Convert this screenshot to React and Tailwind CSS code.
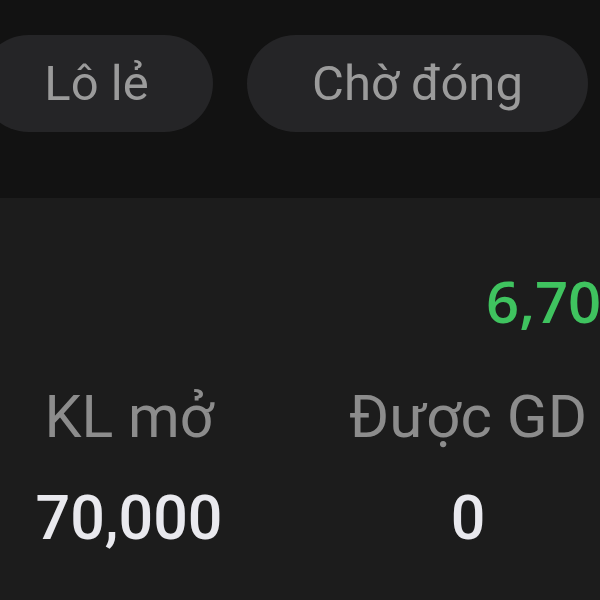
import React from "react";

const roboto = { fontFamily: "Roboto, 'Liberation Sans', sans-serif" };

function Pill({ label, width }) {
  return (
    <div
      className={`${width} h-[97px] shrink-0 rounded-full bg-[#252527] flex items-center justify-center text-[49px] text-[#9b9b9b] leading-none whitespace-nowrap`}
    >
      {label}
    </div>
  );
}

export default function App() {
  return (
    <div
      className="w-[600px] h-[600px] overflow-hidden flex flex-col bg-[#1c1c1c]"
      style={roboto}
    >
      <div className="h-[198px] shrink-0 bg-[#121212] pt-[35px]">
        <div className="flex gap-[34px] ml-[-20px]">
          <Pill label="Lô lẻ" width="w-[233px]" />
          <Pill label="Chờ đóng" width="w-[341px]" />
        </div>
      </div>

      <div className="flex-1 flex flex-col">
        <div
          className="mt-[74px] pl-[486px] whitespace-nowrap text-[58px] leading-none font-semibold text-[#3fc35f]"
          style={{ fontFamily: "'Open Sans', 'Noto Sans', sans-serif" }}
        >
          6,70
        </div>

        <div className="mt-[57px] flex whitespace-nowrap">
          <div className="w-[258px] shrink-0 flex flex-col items-center">
            <span className="text-[59px] leading-none text-[#8c8c8c]">KL mở</span>
            <span className="mt-[42px] text-[61px] leading-none font-medium text-[#e9e9ee]">
              70,000
            </span>
          </div>
          <div className="ml-[80px] w-[260px] shrink-0 flex flex-col items-center">
            <span className="text-[60px] leading-none text-[#8c8c8c]">Được GD</span>
            <span className="mt-[41px] text-[61px] leading-none font-medium text-[#e9e9ee]">
              0
            </span>
          </div>
        </div>
      </div>
    </div>
  );
}
